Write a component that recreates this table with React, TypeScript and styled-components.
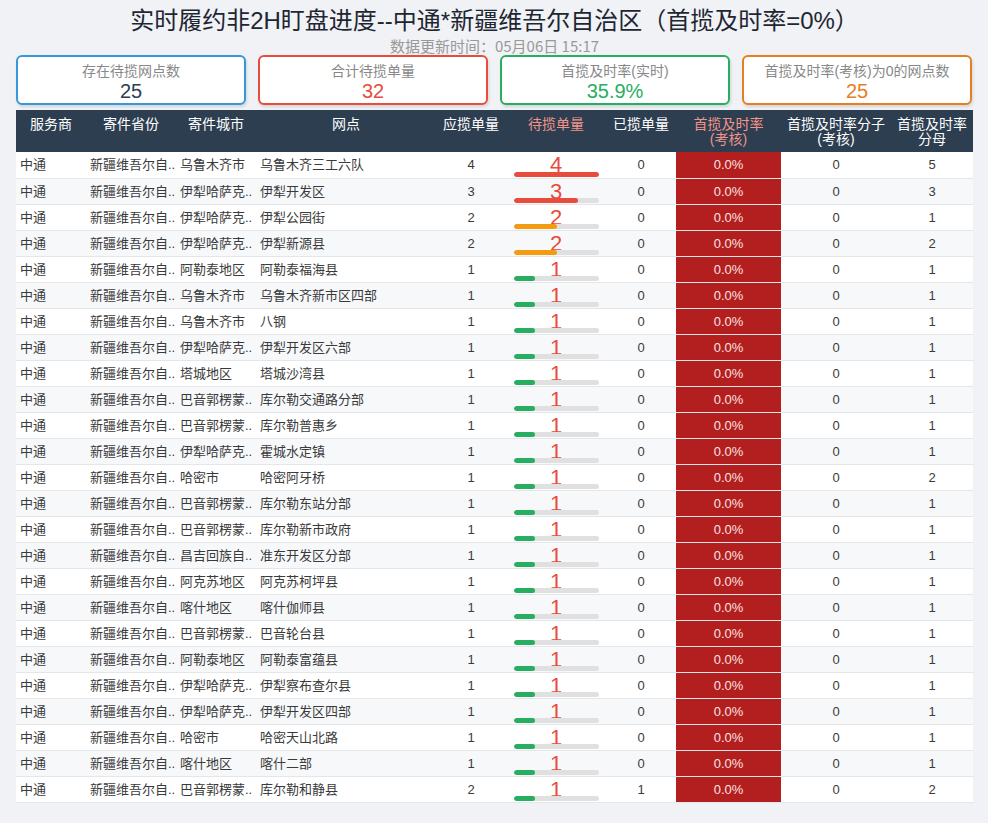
import React from "react";
import styled, { createGlobalStyle } from "styled-components";

type Row = {
  city: string;
  site: string;
  expected: number;
  pending: number;
  done: number;
  numerator: number;
  denominator: number;
};

const rows: Row[] = [
  { city: "乌鲁木齐市", site: "乌鲁木齐三工六队", expected: 4, pending: 4, done: 0, numerator: 0, denominator: 5 },
  { city: "伊犁哈萨克..", site: "伊犁开发区", expected: 3, pending: 3, done: 0, numerator: 0, denominator: 3 },
  { city: "伊犁哈萨克..", site: "伊犁公园街", expected: 2, pending: 2, done: 0, numerator: 0, denominator: 1 },
  { city: "伊犁哈萨克..", site: "伊犁新源县", expected: 2, pending: 2, done: 0, numerator: 0, denominator: 2 },
  { city: "阿勒泰地区", site: "阿勒泰福海县", expected: 1, pending: 1, done: 0, numerator: 0, denominator: 1 },
  { city: "乌鲁木齐市", site: "乌鲁木齐新市区四部", expected: 1, pending: 1, done: 0, numerator: 0, denominator: 1 },
  { city: "乌鲁木齐市", site: "八钢", expected: 1, pending: 1, done: 0, numerator: 0, denominator: 1 },
  { city: "伊犁哈萨克..", site: "伊犁开发区六部", expected: 1, pending: 1, done: 0, numerator: 0, denominator: 1 },
  { city: "塔城地区", site: "塔城沙湾县", expected: 1, pending: 1, done: 0, numerator: 0, denominator: 1 },
  { city: "巴音郭楞蒙..", site: "库尔勒交通路分部", expected: 1, pending: 1, done: 0, numerator: 0, denominator: 1 },
  { city: "巴音郭楞蒙..", site: "库尔勒普惠乡", expected: 1, pending: 1, done: 0, numerator: 0, denominator: 1 },
  { city: "伊犁哈萨克..", site: "霍城水定镇", expected: 1, pending: 1, done: 0, numerator: 0, denominator: 1 },
  { city: "哈密市", site: "哈密阿牙桥", expected: 1, pending: 1, done: 0, numerator: 0, denominator: 2 },
  { city: "巴音郭楞蒙..", site: "库尔勒东站分部", expected: 1, pending: 1, done: 0, numerator: 0, denominator: 1 },
  { city: "巴音郭楞蒙..", site: "库尔勒新市政府", expected: 1, pending: 1, done: 0, numerator: 0, denominator: 1 },
  { city: "昌吉回族自..", site: "准东开发区分部", expected: 1, pending: 1, done: 0, numerator: 0, denominator: 1 },
  { city: "阿克苏地区", site: "阿克苏柯坪县", expected: 1, pending: 1, done: 0, numerator: 0, denominator: 1 },
  { city: "喀什地区", site: "喀什伽师县", expected: 1, pending: 1, done: 0, numerator: 0, denominator: 1 },
  { city: "巴音郭楞蒙..", site: "巴音轮台县", expected: 1, pending: 1, done: 0, numerator: 0, denominator: 1 },
  { city: "阿勒泰地区", site: "阿勒泰富蕴县", expected: 1, pending: 1, done: 0, numerator: 0, denominator: 1 },
  { city: "伊犁哈萨克..", site: "伊犁察布查尔县", expected: 1, pending: 1, done: 0, numerator: 0, denominator: 1 },
  { city: "伊犁哈萨克..", site: "伊犁开发区四部", expected: 1, pending: 1, done: 0, numerator: 0, denominator: 1 },
  { city: "哈密市", site: "哈密天山北路", expected: 1, pending: 1, done: 0, numerator: 0, denominator: 1 },
  { city: "喀什地区", site: "喀什二部", expected: 1, pending: 1, done: 0, numerator: 0, denominator: 1 },
  { city: "巴音郭楞蒙..", site: "库尔勒和静县", expected: 2, pending: 1, done: 1, numerator: 0, denominator: 2 },
];

const stats = [
  { label: "存在待揽网点数", value: "25", color: "#3498db", valueColor: "#2c3e50" },
  { label: "合计待揽单量", value: "32", color: "#e74c3c", valueColor: "#e74c3c" },
  { label: "首揽及时率(实时)", value: "35.9%", color: "#27ae60", valueColor: "#27ae60" },
  { label: "首揽及时率(考核)为0的网点数", value: "25", color: "#e67e22", valueColor: "#e67e22" },
];

const columns: Array<{ label: React.ReactNode; width: number; accent?: boolean }> = [
  { label: "服务商", width: 70 },
  { label: "寄件省份", width: 90 },
  { label: "寄件城市", width: 80 },
  { label: "网点", width: 180 },
  { label: "应揽单量", width: 70 },
  { label: "待揽单量", width: 100, accent: true },
  { label: "已揽单量", width: 70 },
  { label: <>首揽及时率<br />(考核)</>, width: 105, accent: true },
  { label: <>首揽及时率分子<br />(考核)</>, width: 110 },
  { label: <>首揽及时率<br />分母</>, width: 82 },
];

const maxPending = Math.max(...rows.map((r) => r.pending));

function barColor(pending: number) {
  if (pending >= 3) return "#e74c3c";
  if (pending === 2) return "#f39c12";
  return "#27ae60";
}

export default function App() {
  return (
    <>
      <GlobalStyle />
      <Page>
        <Title>实时履约非2H盯盘进度--中通*新疆维吾尔自治区（首揽及时率=0%）</Title>
        <Updated>数据更新时间：05月06日 15:17</Updated>

        <StatGrid>
          {stats.map((s) => (
            <StatCard key={s.label} $border={s.color}>
              <StatLabel>{s.label}</StatLabel>
              <StatValue $color={s.valueColor}>{s.value}</StatValue>
            </StatCard>
          ))}
        </StatGrid>

        <Table>
          <colgroup>
            {columns.map((c, i) => (
              <col key={i} style={{ width: c.width }} />
            ))}
          </colgroup>
          <thead>
            <tr>
              {columns.map((c, i) => (
                <HeadCell key={i} $accent={c.accent}>
                  {c.label}
                </HeadCell>
              ))}
            </tr>
          </thead>
          <tbody>
            {rows.map((r, i) => (
              <BodyRow key={i} $striped={i % 2 === 1}>
                <TextCell>中通</TextCell>
                <TextCell>新疆维吾尔自..</TextCell>
                <TextCell>{r.city}</TextCell>
                <TextCell>{r.site}</TextCell>
                <NumCell>{r.expected}</NumCell>
                <PendingCell>
                  <PendingValue>{r.pending}</PendingValue>
                  <BarTrack>
                    <BarFill
                      $color={barColor(r.pending)}
                      style={{ width: `${(r.pending / maxPending) * 100}%` }}
                    />
                  </BarTrack>
                </PendingCell>
                <NumCell>{r.done}</NumCell>
                <RateCell>0.0%</RateCell>
                <NumCell>{r.numerator}</NumCell>
                <NumCell>{r.denominator}</NumCell>
              </BodyRow>
            ))}
          </tbody>
        </Table>
      </Page>
    </>
  );
}

const GlobalStyle = createGlobalStyle`
  html, body {
    margin: 0;
    padding: 0;
    background: #f0f2f5;
  }

  body {
    font-family: "Liberation Sans", "Noto Sans CJK SC", sans-serif;
    color: #333;
  }
`;

const Page = styled.div`
  padding: 5px 15px 20px 16px;
`;

const Title = styled.h1`
  margin: 0;
  text-align: center;
  font-size: 24px;
  font-weight: 400;
  line-height: 32px;
  color: #1f2633;
`;

const Updated = styled.div`
  text-align: center;
  font-family: "Noto Sans CJK SC", sans-serif;
  font-size: 15px;
  line-height: 17px;
  color: #999;
`;

const StatGrid = styled.div`
  display: grid;
  grid-template-columns: repeat(4, 230px);
  gap: 12px;
  margin-top: 1px;
`;

const StatCard = styled.div<{ $border: string }>`
  box-sizing: border-box;
  height: 50px;
  border: 2px solid ${({ $border }) => $border};
  border-radius: 6px;
  background: #fff;
  box-shadow: 1px 2px 3px rgba(0, 0, 0, 0.12);
  display: flex;
  flex-direction: column;
  align-items: center;
  padding-top: 5px;
`;

const StatLabel = styled.div`
  font-size: 14px;
  line-height: 18px;
  color: #888;
`;

const StatValue = styled.div<{ $color: string }>`
  font-size: 20px;
  line-height: 22px;
  color: ${({ $color }) => $color};
`;

const Table = styled.table`
  margin-top: 5px;
  width: 957px;
  table-layout: fixed;
  border-collapse: collapse;
  background: #fff;
`;

const HeadCell = styled.th<{ $accent?: boolean }>`
  height: 42px;
  box-sizing: border-box;
  padding: 7px 0 0;
  vertical-align: top;
  background: #2c3e50;
  color: ${({ $accent }) => ($accent ? "#f1948a" : "#fff")};
  font-size: 14px;
  font-weight: 400;
  line-height: 15px;
  text-align: center;
`;

const BodyRow = styled.tr<{ $striped: boolean }>`
  height: 26px;
  background: ${({ $striped }) => ($striped ? "#f7f8fa" : "#fff")};
  border-bottom: 1px solid #e4e6e9;
`;

const TextCell = styled.td`
  padding: 0 4px;
  font-size: 13px;
  line-height: 25px;
  color: #3a3a3a;
  white-space: nowrap;
  overflow: hidden;
`;

const NumCell = styled.td`
  padding: 0;
  text-align: center;
  font-size: 13px;
  line-height: 25px;
  color: #3a3a3a;
`;

const PendingCell = styled.td`
  position: relative;
  padding: 0;
  text-align: center;
`;

const PendingValue = styled.div`
  font-size: 22px;
  line-height: 25px;
  font-weight: 300;
  color: #e74c3c;
`;

const BarTrack = styled.div`
  position: absolute;
  left: 8px;
  bottom: 1px;
  width: 85px;
  height: 5px;
  border-radius: 3px;
  background: #e0e0e0;
  overflow: hidden;
`;

const BarFill = styled.div<{ $color: string }>`
  height: 100%;
  border-radius: 3px;
  background: ${({ $color }) => $color};
`;

const RateCell = styled.td`
  padding: 0;
  text-align: center;
  background: #b31e1e;
  color: #fbe3e3;
  font-size: 13px;
  line-height: 25px;
`;
